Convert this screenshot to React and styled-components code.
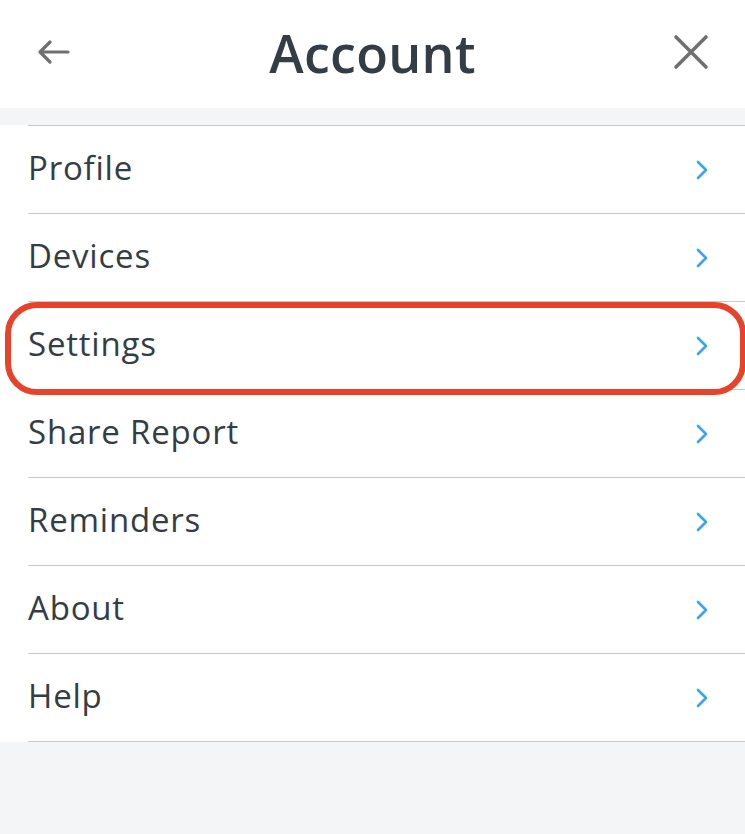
import React from 'react';
import styled, { createGlobalStyle } from 'styled-components';

const GlobalStyle = createGlobalStyle`
  html, body {
    margin: 0;
    padding: 0;
    background: #f4f5f7;
    font-family: "Open Sans", "Lato", sans-serif;
  }
`;

const Page = styled.div`
  width: 745px;
  min-height: 834px;
  background: #f4f5f7;
`;

const Header = styled.header`
  height: 108px;
  background: #ffffff;
  display: flex;
  align-items: center;
  justify-content: space-between;
  padding: 0 36px 4px;
  box-sizing: border-box;
`;

const Title = styled.h1`
  margin: 0;
  font-size: 52px;
  font-weight: 650;
  color: #343d46;
  letter-spacing: 0.3px;
`;

const IconButton = styled.button`
  border: none;
  background: none;
  padding: 0;
  display: flex;
  align-items: center;
  justify-content: center;
  width: 36px;
  height: 36px;
  cursor: pointer;
`;

const List = styled.div`
  margin-top: 17px;
  background: #ffffff;
  padding-left: 28px;
`;

const Row = styled.div`
  position: relative;
  height: 87px;
  display: flex;
  align-items: center;
  justify-content: space-between;
  padding-right: 36px;
  border-top: ${(p) => (p.$first ? '1px solid #c9c9cc' : 'none')};
  border-bottom: 1px solid #c9c9cc;
`;

const Label = styled.span`
  font-size: 33px;
  letter-spacing: 0.8px;
  color: #343d46;
  margin-top: -4px;
`;

const Highlight = styled.div`
  position: absolute;
  left: -23px;
  right: -1px;
  top: 0;
  bottom: -6px;
  border: 6px solid #e8432a;
  border-radius: 32px;
  pointer-events: none;
`;

const Chevron = () => (
  <svg width="14" height="22" viewBox="0 0 14 22" fill="none">
    <path d="M3 3l8 8-8 8" stroke="#3aa5ee" strokeWidth="2.6" strokeLinecap="round" strokeLinejoin="round" />
  </svg>
);

const items = ['Profile', 'Devices', 'Settings', 'Share Report', 'Reminders', 'About', 'Help'];

export default function App() {
  return (
    <Page>
      <GlobalStyle />
      <Header>
        <IconButton aria-label="Back">
          <svg width="34" height="26" viewBox="0 0 34 26" fill="none">
            <path d="M31 13H3M13 3L3 13l10 10" stroke="#707070" strokeWidth="3.2" strokeLinecap="round" strokeLinejoin="round" />
          </svg>
        </IconButton>
        <Title>Account</Title>
        <IconButton aria-label="Close">
          <svg width="36" height="36" viewBox="0 0 36 36" fill="none">
            <path d="M3 3l30 30M33 3L3 33" stroke="#707070" strokeWidth="3.6" strokeLinecap="round" />
          </svg>
        </IconButton>
      </Header>
      <List>
        {items.map((item, i) => (
          <Row key={item} $first={i === 0}>
            <Label>{item}</Label>
            <Chevron />
            {item === 'Settings' && <Highlight />}
          </Row>
        ))}
      </List>
    </Page>
  );
}
